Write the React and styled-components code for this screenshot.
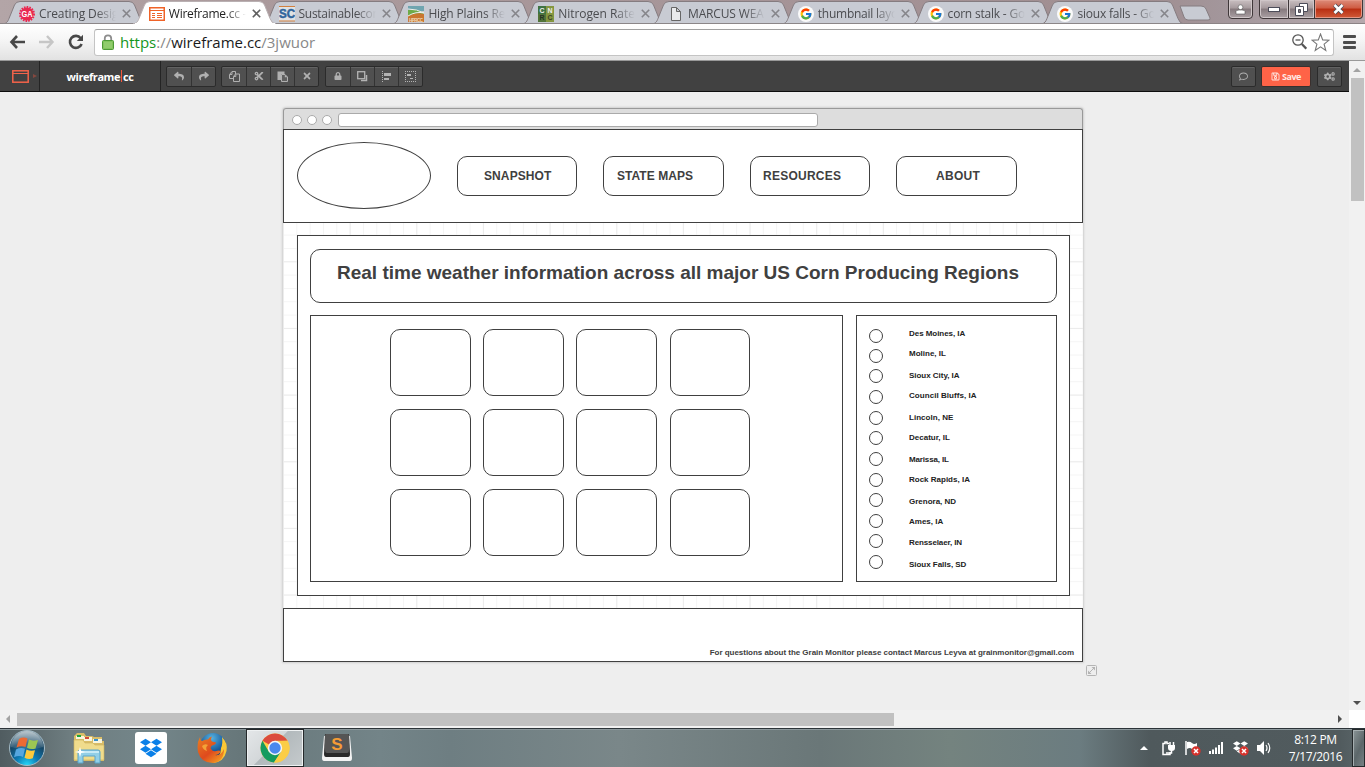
import React from "react";
import styled, { createGlobalStyle } from "styled-components";
import { FaReply, FaShare, FaCut, FaTimes, FaLock, FaRegComment, FaRegSave, FaCogs, FaDropbox } from "react-icons/fa";
import { FcGoogle } from "react-icons/fc";

const Global = createGlobalStyle`
  * { box-sizing: border-box; }
  html, body { margin: 0; padding: 0; overflow: hidden; }
  body { font-family: "Open Sans", "Noto Sans", sans-serif; }
  svg { display: block; flex: none; }
`;

const Screen = styled.div`
  width: 1365px;
  height: 767px;
  display: flex;
  flex-direction: column;
  overflow: hidden;
  background: #eee;
`;

/* ---------- browser chrome ---------- */

const TabStrip = styled.div`
  height: 24px;
  flex: none;
  display: flex;
  padding-left: 4px;
  background: linear-gradient(90deg, #b3a5a7 0, #ab9a9c 240px, #a69598 700px, #a08e91 1150px, #a3979c 1230px, #b6a9ad 1365px);
  border-bottom: 1px solid #8b8385;
`;

const TabBox = styled.div`
  position: relative;
  width: 129.8px;
  height: 24px;
  flex: none;
  display: flex;
  align-items: center;
  padding: 3px 0 0 15px;
  z-index: ${(p) => (p.$active ? 2 : 1)};
`;

const TabShape = styled.svg`
  position: absolute;
  left: -1px;
  top: 0;
`;

const Favicon = styled.span`
  position: relative;
  width: 16px;
  height: 16px;
  flex: none;
`;

const TabTitle = styled.span`
  position: relative;
  width: 77px;
  margin-left: 4px;
  overflow: hidden;
  white-space: nowrap;
  font-size: 12px;
  line-height: 17px;
  letter-spacing: ${(p) => p.$ls}px;
  color: ${(p) => (p.$active ? "#222" : "#4b4c50")};
  -webkit-mask-image: linear-gradient(90deg, #000 57px, transparent 77px);
  mask-image: linear-gradient(90deg, #000 57px, transparent 77px);
`;

const TabClose = styled.svg`
  position: relative;
  margin-left: 6px;
`;

const NewTab = styled.svg`
  margin: 5px 0 0 7px;
`;

const WindowButtons = styled.div`
  display: flex;
  margin-left: auto;
  margin-right: 2px;
`;

const WinButton = styled.div`
  width: ${(p) => p.$w}px;
  height: 20px;
  display: flex;
  align-items: center;
  justify-content: center;
  margin-left: ${(p) => p.$gap || 0}px;
  margin-top: -1px;
  border: 1px solid #3f3739;
  border-left-width: ${(p) => (p.$joined ? 0 : 1)}px;
  border-radius: ${(p) => p.$radius};
  box-shadow: inset 0 0 0 1px ${(p) => (p.$close ? "#e59684" : "#cfc6c8")};
  background: ${(p) => p.$close
    ? "linear-gradient(#dc8b79 0, #cf5b42 45%, #b92e12 50%, #d05a38 100%)"
    : "linear-gradient(#c9bfc1 0, #a69a9d 45%, #85797d 50%, #aaa0a3 100%)"};
`;

const AddressRow = styled.div`
  height: 37px;
  flex: none;
  display: flex;
  align-items: center;
  padding: 0 9px;
  background: linear-gradient(#fff 0, #f6f6f6 15px, #e2e2e2 100%);
  border-bottom: 1px solid #999;
`;

const NavIcons = styled.div`
  display: flex;
  gap: 13px;
  width: 85px;
`;

const Omnibox = styled.div`
  width: 1240px;
  height: 27px;
  display: flex;
  align-items: center;
  gap: 4px;
  padding: 0 3px 0 7px;
  background: #fff;
  border: 1px solid #c4c4c4;
  border-top-color: #a0a0a0;
  border-radius: 3px;
`;

const Url = styled.span`
  flex: 1;
  margin-left: 2px;
  font-size: 15px;
  line-height: 20px;
  letter-spacing: 0;
  color: #888;
  b { font-weight: 400; color: #1a1a1a; }
  i { font-style: normal; color: #14961d; }
`;

const MenuBars = styled.div`
  width: 13px;
  height: 14px;
  margin-left: 9px;
  display: flex;
  flex-direction: column;
  justify-content: space-between;
`;

const Bar = styled.span`
  height: 3px;
  border-radius: 1px;
  background: #4c4c4c;
`;

/* ---------- application toolbar ---------- */

const Viewport = styled.div`
  height: 667px;
  flex: none;
  display: grid;
  grid-template-columns: 1349px 16px;
  grid-template-rows: 649px 18px;
`;

const AppPane = styled.div`
  overflow: hidden;
  background: #eee;
`;

const Toolbar = styled.div`
  height: 31px;
  display: flex;
  align-items: stretch;
  padding-right: 7px;
  background: #414141;
  border-bottom: 1px solid #0d0d0d;
`;

const DevicePicker = styled.div`
  width: 40px;
  display: flex;
  align-items: center;
  padding-left: 12px;
  gap: 4px;
  border-right: 1px solid #242424;
`;

const Brand = styled.div`
  width: 121px;
  display: flex;
  align-items: center;
  justify-content: center;
  border-right: 1px solid #242424;
  color: #fff;
  font-size: 11px;
  font-weight: 700;
  letter-spacing: -0.45px;
`;

const Caret = styled.span`
  flex: none;
  width: 1px;
  height: 12px;
  margin: 0 1px;
  border-left: 1px solid #f4553c;
`;

const ButtonGroup = styled.div`
  display: flex;
  align-self: center;
  height: 21px;
  margin-left: ${(p) => p.$left}px;
  border: 1px solid #2b2b2b;
  border-radius: 2px;
  background: #505050;
  box-shadow: inset 0 1px 0 #636363;
`;

const ToolButton = styled.div`
  width: ${(p) => p.$w || 24}px;
  display: flex;
  align-items: center;
  justify-content: center;
  color: #b0b0b0;
  font-size: 10px;
  & + & { border-left: 1px solid #333; }
`;

const Actions = styled.div`
  display: flex;
  align-items: center;
  margin-left: auto;
`;

const SaveButton = styled.div`
  width: 50px;
  height: 21px;
  margin: 0 -1px 0 5px;
  display: flex;
  align-items: center;
  justify-content: center;
  gap: 2px;
  border: 1px solid #39302e;
  border-radius: 2px;
  background: #ff6347;
  color: #ffe9e4;
  font-size: 9px;
  font-weight: 700;
  letter-spacing: -0.5px;
`;

/* ---------- wireframe document ---------- */

const ink = "#404040";

const Canvas = styled.div`
  display: flex;
  align-items: flex-end;
  height: 584px;
  padding-left: 283px;
`;

const Mock = styled.div`
  width: 800px;
  height: 554px;
  margin-bottom: 14px;
  display: flex;
  flex-direction: column;
  border-radius: 3px 3px 0 0;
  box-shadow: 0 0 2px 1px #cfcfcf;
  background-color: #fff;
  background-image:
    linear-gradient(90deg, #ececec 1px, transparent 1px),
    linear-gradient(#ececec 1px, transparent 1px),
    linear-gradient(90deg, #f4f4f4 1px, transparent 1px),
    linear-gradient(#f4f4f4 1px, transparent 1px);
  background-size: 66.67px 66.67px, 66.67px 66.67px, 13.333px 13.333px, 13.333px 13.333px;
  background-position: 0 20px;
`;

const MockBar = styled.div`
  height: 21px;
  flex: none;
  display: flex;
  align-items: center;
  padding: 2px 0 0 8px;
  border: 1px solid #999;
  border-bottom: 0;
  border-radius: 3px 3px 0 0;
  background: #ddd;
`;

const Dot = styled.span`
  width: 10px;
  height: 10px;
  margin-right: 5px;
  border: 1px solid #aaa;
  border-radius: 50%;
  background: #fff;
`;

const MockAddress = styled.span`
  width: 480px;
  height: 14px;
  margin-left: 1px;
  border: 1px solid #aaa;
  border-radius: 3px;
  background: #fff;
`;

const Box = styled.div`
  border: 1px solid ${ink};
  border-radius: ${(p) => (p.$round ? 10 : 0)}px;
  background: #fff;
  font-family: "Liberation Sans", Arial, sans-serif;
  font-weight: 700;
  color: ${ink};
`;

const Header = styled(Box)`
  height: 94px;
  flex: none;
  display: flex;
  align-items: center;
  padding-left: 13px;
`;

const Logo = styled(Box)`
  width: 134px;
  height: 67px;
  margin: 0 26px 1px 0;
  border-radius: 50%;
`;

const NavItem = styled(Box)`
  width: ${(p) => p.$w}px;
  height: 40px;
  margin-right: 26px;
  padding-left: ${(p) => p.$pad}px;
  font-size: 12px;
  line-height: 38px;
  letter-spacing: ${(p) => p.$ls}px;
  white-space: nowrap;
`;

const Main = styled(Box)`
  width: 773px;
  height: 361px;
  flex: none;
  margin: 12px 0 12px 14px;
  padding: 13px 12px 0;
`;

const Headline = styled(Box)`
  height: 54px;
  margin-bottom: 12px;
  padding-left: 26px;
  font-size: 19px;
  line-height: 45px;
  letter-spacing: 0;
  white-space: nowrap;
`;

const Columns = styled.div`
  display: flex;
  justify-content: space-between;
`;

const Gallery = styled(Box)`
  width: 533px;
  height: 267px;
  padding: 13px 0 0 79px;
  display: grid;
  grid-template-columns: repeat(4, 80.5px);
  grid-auto-rows: 67px;
  gap: 13px 12.68px;
`;

const Thumb = styled(Box)``;

const Cities = styled(Box)`
  width: 201px;
  height: 267px;
  padding: 13px 0 0 12px;
`;

const City = styled.div`
  height: ${(p) => p.$h}px;
  display: flex;
  color: #222;
  font-size: 8px;
  line-height: 14px;
  white-space: nowrap;
`;

const Radio = styled(Box)`
  width: 14px;
  height: 14px;
  margin-right: 26px;
  border-radius: 50%;
`;

const CityName = styled.span`
  margin-top: ${(p) => p.$shift}px;
  letter-spacing: ${(p) => p.$ls}px;
`;

const Footer = styled(Box)`
  height: 54px;
  flex: none;
  display: flex;
  justify-content: flex-end;
  align-items: flex-end;
  padding: 0 8px 2px 0;
  font-size: 8px;
  line-height: 12px;
  letter-spacing: -0.03px;
  white-space: nowrap;
`;

const ResizeHandle = styled.svg`
  margin-left: 3px;
`;

/* ---------- scrollbars ---------- */

const VScroll = styled.div`
  background: #f1f1f1;
  display: flex;
  flex-direction: column;
  align-items: center;
  justify-content: space-between;
  padding: 7px 0 5px;
`;

const VThumb = styled.div`
  width: 13px;
  height: 123px;
  margin: 6px 0 auto 1px;
  background: #c1c1c1;
`;

const HScroll = styled.div`
  background: #f1f1f1;
  display: flex;
  align-items: center;
  padding: 0 7px 0 6px;
`;

const HThumb = styled.div`
  width: 877px;
  height: 13px;
  margin: 0 auto 0 7px;
  background: #c1c1c1;
`;

const Corner = styled.div`
  background: #fff;
`;

/* ---------- taskbar ---------- */

const Taskbar = styled.div`
  height: 39px;
  flex: none;
  display: flex;
  align-items: center;
  border-top: 1px solid #2c3439;
  box-shadow: inset 0 1px 0 #8d999d;
  background: linear-gradient(90deg, #505c60 0, #6e7d80 70px, #74868a 150px, #67777a 240px, #738488 380px, #6e7e82 450px, #7a8789 620px, #6a7778 820px, #74837f 950px, #6b7c80 1080px, #4f595c 1150px, #515b5e 1340px, #5b6669 1365px);
`;

const TaskItem = styled.div`
  width: ${(p) => p.$w}px;
  height: 38px;
  display: flex;
  align-items: center;
  justify-content: center;
  ${(p) => p.$active && `
    border: 1px solid #25292b;
    box-shadow: inset 0 0 0 1px #eef1f2;
    background: linear-gradient(135deg, #e4e7e9 0, #d3d7d9 45%, #b2b9bc 46%, #c5cacc 100%);
  `}
`;

const DropboxTile = styled.div`
  width: 32px;
  height: 32px;
  display: flex;
  align-items: center;
  justify-content: center;
  border-radius: 3px;
  background: #fff;
  color: #0a80e8;
  font-size: 22px;
`;

const Tray = styled.div`
  margin-left: auto;
  display: flex;
  align-items: center;
`;

const TrayIcon = styled.div`
  position: relative;
  width: 24px;
  height: 16px;
  display: flex;
  justify-content: center;
  color: #fff;
  font-size: 15px;
`;

const Badge = styled.svg`
  position: absolute;
  right: 3px;
  bottom: 0;
`;

const Clock = styled.div`
  width: 73px;
  margin-left: 3px;
  text-align: center;
  color: #fff;
  font-size: 12px;
  line-height: 17px;
  letter-spacing: -0.35px;
`;

const ShowDesktop = styled.div`
  width: 13px;
  height: 38px;
  border: 1px solid #24292b;
  box-shadow: inset 1px 1px 0 #a5aeb0;
  background: linear-gradient(115deg, #8b9597, #5c676a 55%, #768083);
`;

/* ---------- icons ---------- */

const GoogleIcon = () => (
  <svg width="16" height="16" viewBox="0 0 16 16">
    <circle cx="8" cy="8" r="8" fill="#fafafa" />
    <FcGoogle x="1.5" y="1.5" size="13" />
  </svg>
);

const icons = {
  ga: (
    <svg width="16" height="16" viewBox="0 0 16 16">
      <circle cx="8" cy="8" r="6.6" fill="#ea2850" />
      <circle cx="8" cy="8" r="7" fill="none" stroke="#ea2850" strokeWidth="2" strokeDasharray="1.6 1.1" />
      <text x="8" y="11.3" fontSize="9.500" fontWeight="700" textAnchor="middle" textLength="11" lengthAdjust="spacingAndGlyphs" fill="#fff" fontFamily="Liberation Sans">GA</text>
    </svg>
  ),
  wire: (
    <svg width="16" height="16" viewBox="0 0 16 16" fill="none" stroke="#ef6328">
      <rect x=".75" y="1.75" width="14.5" height="12.5" strokeWidth="1.5" />
      <path d="M1 4.500h14M3 7.500h3M3 9.500h3M3 11.500h3M8 7.500h5M8 9.500h5M8 11.500h5" />
    </svg>
  ),
  sc: (
    <svg width="16" height="16" viewBox="0 0 16 16">
      <rect y="1" width="16" height="14" fill="#dfe2e4" />
      <path d="M0 .5h16M0 15h16" stroke="#d2803e" />
      <text x="8" y="12" fontSize="12" fontWeight="700" textAnchor="middle" textLength="16" lengthAdjust="spacingAndGlyphs" fill="#2f659c" stroke="#2f659c" strokeWidth=".5" fontFamily="Liberation Sans">SC</text>
    </svg>
  ),
  hp: (
    <svg width="16" height="16" viewBox="0 0 16 16">
      <path d="M0 0h16v5H0z" fill="#6fa5b0" />
      <path d="M0 4q9-2 16 3v3H0z" fill="#6dab49" />
      <path d="M0 10q8-4 16-2v8H0z" fill="#c9762f" />
      <path d="M0 10q8-5 16-3M0 3q9 0 16 4" stroke="#eee" fill="none" />
      <text x="8" y="15.5" fontSize="4.5" fontWeight="700" textAnchor="middle" textLength="14" fill="#eed9bd" fontFamily="Liberation Sans">HPRCC</text>
    </svg>
  ),
  cn: (
    <svg width="16" height="16" viewBox="0 0 16 16">
      <path d="M0 0h8v16H0z" fill="#3f7342" />
      <path d="M8 0h8v16H8z" fill="#849640" />
      <path d="M0 8h8v8H0z" fill="#52743a" />
      <g fontSize="7" fontWeight="700" textAnchor="middle" fontFamily="Liberation Sans">
        <text x="4" y="6.5" fill="#eee">C</text><text x="12" y="6.5" fill="#eee">N</text>
        <text x="4" y="14" fill="#263423">R</text><text x="12" y="14" fill="#3c4526">C</text>
      </g>
    </svg>
  ),
  page: (
    <svg width="16" height="16" viewBox="0 0 16 16" fill="#e9eaec" stroke="#666">
      <path d="M3.500 1.500h5l4 4v9h-9zM8.500 1.500v4h4" />
    </svg>
  ),
  google: <GoogleIcon />,
};

const tabs = [
  { icon: "ga", title: "Creating Desig", ls: -0.12 },
  { icon: "wire", title: "Wireframe.cc -", ls: -0.25, active: true },
  { icon: "sc", title: "Sustainablecor", ls: -0.3 },
  { icon: "hp", title: "High Plains Re", ls: -0.15 },
  { icon: "cn", title: "Nitrogen Rate", ls: -0.05 },
  { icon: "page", title: "MARCUS WEA", ls: -0.15 },
  { icon: "google", title: "thumbnail layo", ls: -0.25 },
  { icon: "google", title: "corn stalk - Go", ls: -0.2 },
  { icon: "google", title: "sioux falls - Go", ls: -0.2 },
];

const Tab = ({ icon, title, ls, active }) => (
  <TabBox $active={active}>
    <TabShape width="144" height="24" viewBox="0 0 144 24">
      <path
        d="M0 24C4 23.500 5 21 6 18.500L11.500 5Q13 1.500 17 1.500H126Q130 1.500 131.500 5L137 18.500Q139 24 143 24Z"
        fill={active ? "#fff" : "#c8cbd3"}
        stroke={active ? "#b9b0b2" : "#857c80"}
      />
      {active ? <path d="M2 24h140" stroke="#fff" strokeWidth="2" /> : <path d="M0 23.500h143" stroke="#8b8688" />}
    </TabShape>
    <Favicon>{icons[icon]}</Favicon>
    <TabTitle $active={active} $ls={ls}>{title}</TabTitle>
    <TabClose width="9" height="9" viewBox="0 0 9 9" stroke={active ? "#606060" : "#85858a"} strokeWidth="1.6">
      <path d="M.8.8l7.400 7.400M8.200.8L.8 8.200" />
    </TabClose>
  </TabBox>
);

const FilesIcon = () => (
  <svg width="11" height="11" viewBox="0 0 11 11" fill="none" stroke="#b0b0b0">
    <path d="M4 7.500H.5v-4l2.500-3h3.500V3M.8 3.500H3V.8" />
    <path d="M4.500 5.500l2-2.500h4v7.500h-6zM4.800 5.500h2V3.200" />
  </svg>
);

const PasteIcon = () => (
  <svg width="11" height="11" viewBox="0 0 11 11">
    <path d="M.5.5h7V3H4v6H.5z" fill="#b0b0b0" />
    <path d="M4.500 3.500h3.500L10.500 6v4.500h-6z" fill="#606060" stroke="#b0b0b0" />
    <path d="M7.800 3.500v2.700h2.700z" fill="#b0b0b0" />
  </svg>
);

const AlignIcon = () => (
  <svg width="11" height="11" viewBox="0 0 11 11" shapeRendering="crispEdges">
    <path d="M1.500 0v11" stroke="#b4b4b4" strokeDasharray="1 1" />
    <path d="M3 2h7v3H3zM3 7h5v2H3z" fill="#b4b4b4" />
  </svg>
);

const GroupIcon = () => (
  <svg width="11" height="11" viewBox="0 0 11 11" shapeRendering="crispEdges">
    <path d="M0 .5h11M0 10.500h11M.5 0v11M10.500 0v11" stroke="#b4b4b4" strokeDasharray="1 1" />
    <path d="M2 3h4v2H2zM5 7h3v1H5z" fill="#b4b4b4" />
  </svg>
);

const StackIcon = () => (
  <svg width="11" height="11" viewBox="0 0 11 11" fill="none" stroke="#b4b4b4">
    <rect x=".7" y=".7" width="7" height="7" strokeWidth="1.300" />
    <path d="M9.500 4v5.500H4" strokeWidth="1.500" />
  </svg>
);

const RedX = () => (
  <Badge width="10" height="10" viewBox="0 0 10 10">
    <circle cx="5" cy="5" r="4.700" fill="#d6322c" />
    <path d="M3 3l4 4M7 3L3 7" stroke="#fff" strokeWidth="1.500" />
  </Badge>
);

const StartOrb = () => (
  <svg width="38" height="38" viewBox="0 0 38 38">
    <defs>
      <radialGradient id="orb" cx=".5" cy="1" r=".95">
        <stop offset="0" stopColor="#27dcfb" /><stop offset=".35" stopColor="#0b79b3" />
        <stop offset=".7" stopColor="#174766" /><stop offset="1" stopColor="#6b8796" />
      </radialGradient>
      <linearGradient id="orbShine" x2="0" y2="1">
        <stop offset="0" stopColor="#fff" stopOpacity=".5" /><stop offset="1" stopColor="#fff" stopOpacity=".08" />
      </linearGradient>
    </defs>
    <circle cx="19" cy="19" r="17.500" fill="url(#orb)" stroke="#a3bac5" />
    <path d="M3 18a16 16 0 0 1 32 0q-15 5-32 0z" fill="url(#orbShine)" />
    <path d="M11 10q4-2.500 8.500-.5L17.500 18q-4.500-1.500-9 .5z" fill="#ec6a33" />
    <path d="M21 10.500q4 2 9 .5l-2.500 8.500q-4.500 1.500-8.500-.8z" fill="#9cc653" />
    <path d="M8 20.500q4.500-2.300 9-.8L15 28q-4-2-9 .3z" fill="#55a6df" />
    <path d="M18.500 20.500q4 2 8.500.8l-2.200 8q-4 1.800-8.300-.6z" fill="#fbc93c" />
  </svg>
);

const ExplorerIcon = () => (
  <svg width="34" height="32" viewBox="0 0 34 32">
    <path d="M2 4l3-3h7l2 3h6l2 1h8v4h2v20H2z" fill="#d9bd68" />
    <path d="M4 4h8v3H4zM12 5h8v4h-8zM21 7h9v4h-9z" fill="#f9f5dd" />
    <path d="M5 3h4v2H5z" fill="#1ca43b" /><path d="M13 5h4v2h-4z" fill="#d44a36" /><path d="M22 7h4v2h-4z" fill="#3990c9" />
    <path d="M2 8h9l2 3h8l2 2h9v15H2z" fill="#f0dc8c" stroke="#cfb25c" strokeWidth=".6" />
    <path d="M6 31V20q0-2 2-2h18q2 0 2 2v11h-5v-7H11v7z" fill="#92cfe7" stroke="#5ba4c9" />
    <path d="M7 20h20" stroke="#d8f3fb" strokeWidth="1.500" />
    <path d="M8 15l1.200 4 4 1-4 1-1.200 4-1.200-4-4-1 4-1z" fill="#fff" />
  </svg>
);

const FirefoxIcon = () => (
  <svg width="31" height="32" viewBox="0 0 31 32">
    <defs>
      <linearGradient id="fox" x2=".8" y2="1">
        <stop offset="0" stopColor="#e98021" /><stop offset=".6" stopColor="#df4a1d" /><stop offset="1" stopColor="#f59b22" />
      </linearGradient>
      <radialGradient id="globe" cx=".45" cy=".2" r=".8">
        <stop offset="0" stopColor="#57b2df" /><stop offset=".6" stopColor="#1b5e9f" /><stop offset="1" stopColor="#112e63" />
      </radialGradient>
    </defs>
    <circle cx="16" cy="14" r="13" fill="url(#globe)" />
    <path d="M25 5q6 6 4.500 14Q27 30 16 31 24 25 24 16q2-4 1-11z" fill="#fbc735" />
    <path d="M3 5q0 3 2 4 3-2 6-1.500 1-2.500 4-3-2 3 0 5l4 1q0 2-4 3-2 2-1 3.500 2 3 5 2 3-1 5 0-2 4-6 4 6 1 9-6Q27 30 16 31 4 31 1 20-.5 11 3 5z" fill="url(#fox)" />
    <path d="M5 14q3-3 6-1-3 2-1 6-4-1-5-5z" fill="#f3a238" />
  </svg>
);

const ChromeIcon = () => (
  <svg width="30" height="30" viewBox="0 0 30 30">
    <circle cx="15" cy="15" r="14.500" fill="#fbcd46" />
    <path d="M15 15L2.450 7.750A14.500 14.500 0 0 1 27.550 7.750H15z" fill="#db4b3e" />
    <path d="M2.450 7.750A14.500 14.500 0 0 0 14 29.500L21.300 18.600 15 15 8.700 18.600z" fill="#149b5f" />
    <path d="M27.550 7.750A14.500 14.500 0 0 1 14 29.500L21.300 18.600 21 8z" fill="#fbcd46" />
    <circle cx="15" cy="15" r="7.200" fill="#f4f6f9" /><circle cx="15" cy="15" r="5.700" fill="#4a88ee" />
  </svg>
);

const SublimeIcon = () => (
  <svg width="32" height="30" viewBox="0 0 32 30">
    <path d="M3 3h26l2 22q0 3-2 3H3q-2 0-2-3z" fill="#f3f3f3" />
    <path d="M4 1h24l1 20q0 3-2 3H5q-2 0-2-3z" fill="#292929" />
    <path d="M5 1h22q1 0 1 2v14q0 3-2 3H6q-2 0-2-3V3q0-2 1-2z" fill="#555" />
    <text x="16" y="16.500" fontSize="17" fontWeight="700" fill="#f59c35" textAnchor="middle" fontFamily="Liberation Sans">S</text>
  </svg>
);

const nav = [
  { label: "SNAPSHOT", w: 120, pad: 26, ls: 0.1 },
  { label: "STATE MAPS", w: 121, pad: 13, ls: 0.05 },
  { label: "RESOURCES", w: 120, pad: 12, ls: 0.25 },
  { label: "ABOUT", w: 121, pad: 39, ls: 0.3 },
];

const cities = [
  ["Des Moines, IA", 20, -2, -0.05],
  ["Moline, IL", 20, -2, 0],
  ["Sioux City, IA", 21, 0, -0.03],
  ["Council Bluffs, IA", 21, -1, 0.05],
  ["Lincoln, NE", 20, 0, 0.03],
  ["Decatur, IL", 21, 0, 0],
  ["Marissa, IL", 21, 1, -0.15],
  ["Rock Rapids, IA", 20, 0, 0],
  ["Grenora, ND", 21, 2, 0],
  ["Ames, IA", 20, 1, 0],
  ["Rensselaer, IN", 21, 2, -0.12],
  ["Sioux Falls, SD", 14, 3, -0.03],
];

export default function App() {
  return (
    <Screen>
      <Global />
      <TabStrip>
        {tabs.map((t) => <Tab key={t.title} {...t} />)}
        <NewTab width="33" height="16" viewBox="0 0 33 16">
          <path d="M1 1h21q4 0 5 3l4 9q1 2-2 2H9q-3 0-4-3z" fill="#c8cbd3" stroke="#857c80" />
        </NewTab>
        <WindowButtons>
          <WinButton $w={25} $radius="0 0 4px 4px">
            <svg width="11" height="11" viewBox="0 0 11 11" fill="#fff" stroke="#555" strokeWidth=".6">
              <path d="M1 10V7.500Q1 6 4 6h3q3 0 3 1.500V10z" /><circle cx="5.500" cy="3.200" r="2.400" />
            </svg>
          </WinButton>
          <WinButton $w={30} $gap={6} $radius="0 0 0 4px">
            <svg width="12" height="5" viewBox="0 0 12 5"><rect x=".5" y=".5" width="11" height="4" fill="#fff" stroke="#4c4c59" /></svg>
          </WinButton>
          <WinButton $w={26} $joined $radius="0">
            <svg width="13" height="13" viewBox="0 0 13 13" fill="#fff" stroke="#4c4c59">
              <path d="M4.500.5h8v8h-8z" /><path d="M.5 3.500h8v9h-8z" /><path d="M3.500 6.500h2v3h-2z" fill="#8a7e82" />
            </svg>
          </WinButton>
          <WinButton $w={48} $joined $close $radius="0 0 4px 0">
            <svg width="13" height="12" viewBox="0 0 13 12">
              <path d="M2.500 2l8 8M10.500 2l-8 8" stroke="#4c4c59" strokeWidth="4.200" />
              <path d="M2.500 2l8 8M10.500 2l-8 8" stroke="#fff" strokeWidth="2.500" />
            </svg>
          </WinButton>
        </WindowButtons>
      </TabStrip>

      <AddressRow>
        <NavIcons>
          <svg width="17" height="16" viewBox="0 0 17 16" fill="none" stroke="#484848" strokeWidth="2.600"><path d="M8 2L2.500 8 8 14M3 8h13" /></svg>
          <svg width="16" height="16" viewBox="0 0 16 16" fill="none" stroke="#c6c6c6" strokeWidth="2.400"><path d="M8 2l5.500 6L8 14M13 8H0" /></svg>
          <svg width="16" height="16" viewBox="0 0 16 16"><path d="M12.700 4.200A6 6 0 1 0 13.600 10" fill="none" stroke="#484848" strokeWidth="2.600" /><path d="M15 .8V7H8.800z" fill="#484848" /></svg>
        </NavIcons>
        <Omnibox>
          <svg width="12" height="16" viewBox="0 0 12 16">
            <path d="M2.800 8V4.500a3.200 3.200 0 0 1 6.400 0V8" fill="none" stroke="#8d8d8d" strokeWidth="1.800" />
            <rect x=".5" y="6.500" width="11" height="9" rx="1" fill="#82c45c" stroke="#4c9a35" />
            <path d="M2 9h8M2 11h8M2 13h8" stroke="#a7da86" strokeWidth=".8" />
          </svg>
          <Url><i>https</i>://<b>wireframe.cc</b>/3jwuor</Url>
          <svg width="15" height="16" viewBox="0 0 15 16" fill="none" stroke="#555"><circle cx="6" cy="6" r="5.200" strokeWidth="1.300" /><path d="M9.800 10l4.500 4.700" strokeWidth="2.200" /><path d="M3.500 6h5" strokeWidth="1.300" /></svg>
          <svg width="19" height="19" viewBox="0 0 19 19" fill="#fff" stroke="#777" strokeWidth="1.100"><path d="M9.500 1l2.200 5.900 6.300.3-4.900 3.900 1.700 6.400-5.300-3.600-5.300 3.600 1.700-6.400L1 7.200l6.300-.3z" /></svg>
        </Omnibox>
        <MenuBars><Bar /><Bar /><Bar /></MenuBars>
      </AddressRow>

      <Viewport>
        <AppPane>
          <Toolbar>
            <DevicePicker>
              <svg width="17" height="13" viewBox="0 0 17 13" fill="none" stroke="#f4634a"><rect x=".8" y=".8" width="15.400" height="11.400" strokeWidth="1.500" /><path d="M1 3.500h15" /></svg>
              <svg width="4" height="4" viewBox="0 0 4 4"><path d="M0 0l4 2-4 2z" fill="#85483f" /></svg>
            </DevicePicker>
            <Brand>wireframe<Caret />cc</Brand>
            <ButtonGroup $left={5}>
              <ToolButton><FaReply /></ToolButton>
              <ToolButton><FaShare /></ToolButton>
            </ButtonGroup>
            <ButtonGroup $left={5}>
              <ToolButton><FilesIcon /></ToolButton>
              <ToolButton><FaCut /></ToolButton>
              <ToolButton><PasteIcon /></ToolButton>
              <ToolButton><FaTimes size={10} /></ToolButton>
            </ButtonGroup>
            <ButtonGroup $left={6}>
              <ToolButton><FaLock size={8} /></ToolButton>
              <ToolButton><StackIcon /></ToolButton>
              <ToolButton><AlignIcon /></ToolButton>
              <ToolButton><GroupIcon /></ToolButton>
            </ButtonGroup>
            <Actions>
              <ButtonGroup $left={0}><ToolButton $w={23}><FaRegComment size={9} /></ToolButton></ButtonGroup>
              <SaveButton><FaRegSave />Save</SaveButton>
              <ButtonGroup $left={7}><ToolButton $w={23}><FaCogs size={11} /></ToolButton></ButtonGroup>
            </Actions>
          </Toolbar>

          <Canvas>
            <Mock>
              <MockBar><Dot /><Dot /><Dot /><MockAddress /></MockBar>
              <Header>
                <Logo />
                {nav.map((n) => <NavItem key={n.label} $round $w={n.w} $pad={n.pad} $ls={n.ls}>{n.label}</NavItem>)}
              </Header>
              <Main>
                <Headline $round>Real time weather information across all major US Corn Producing Regions</Headline>
                <Columns>
                  <Gallery>{Array.from({ length: 12 }, (_, i) => <Thumb key={i} $round />)}</Gallery>
                  <Cities>
                    {cities.map(([name, h, shift, ls]) => (
                      <City key={name} $h={h}><Radio /><CityName $shift={shift} $ls={ls}>{name}</CityName></City>
                    ))}
                  </Cities>
                </Columns>
              </Main>
              <Footer>For questions about the Grain Monitor please contact Marcus Leyva at grainmonitor@gmail.com</Footer>
            </Mock>
            <ResizeHandle width="11" height="11" viewBox="0 0 11 11" fill="none" stroke="#b4b4b4">
              <rect x=".5" y=".5" width="10" height="10" rx="1" /><path d="M3 8l5-5" /><path d="M5.500 2H9v3.500zM2 5.500V9h3.500z" fill="#b4b4b4" stroke="none" />
            </ResizeHandle>
          </Canvas>
        </AppPane>
        <VScroll>
          <svg width="8" height="4" viewBox="0 0 8 4"><path d="M0 4l4-4 4 4z" fill="#a3a3a3" /></svg>
          <VThumb />
          <svg width="8" height="4" viewBox="0 0 8 4"><path d="M0 0l4 4 4-4z" fill="#505050" /></svg>
        </VScroll>
        <HScroll>
          <svg width="4" height="8" viewBox="0 0 4 8"><path d="M4 0L0 4l4 4z" fill="#a3a3a3" /></svg>
          <HThumb />
          <svg width="4" height="8" viewBox="0 0 4 8"><path d="M0 0l4 4-4 4z" fill="#505050" /></svg>
        </HScroll>
        <Corner />
      </Viewport>

      <Taskbar>
        <TaskItem $w={54}><StartOrb /></TaskItem>
        <TaskItem $w={70}><ExplorerIcon /></TaskItem>
        <TaskItem $w={54}><DropboxTile><FaDropbox /></DropboxTile></TaskItem>
        <TaskItem $w={68}><FirefoxIcon /></TaskItem>
        <TaskItem $w={58} $active><ChromeIcon /></TaskItem>
        <TaskItem $w={66}><SublimeIcon /></TaskItem>
        <Tray>
          <TrayIcon><svg width="8" height="16" viewBox="0 0 8 16"><path d="M0 10l4-4 4 4z" fill="#fff" /></svg></TrayIcon>
          <TrayIcon>
            <svg width="15" height="16" viewBox="0 0 15 16" fill="none" stroke="#fff" strokeWidth="1.500">
              <path d="M8 3.500H6V2H4v1.500H2v11h7V12" /><path d="M9 2v3M12.500 2v3" /><path d="M7 5h7v3q0 3-3.500 3T7 8z" fill="#fff" stroke="none" /><path d="M10.500 10v3H5" />
            </svg>
          </TrayIcon>
          <TrayIcon>
            <svg width="16" height="16" viewBox="0 0 16 16"><path d="M2 1v14" stroke="#fff" strokeWidth="1.500" /><path d="M3 2q3-1 5 1t5 0v7q-3 1-5-1T3 9z" fill="#fff" /></svg>
            <RedX />
          </TrayIcon>
          <TrayIcon>
            <svg width="16" height="16" viewBox="0 0 16 16" fill="#fff"><path d="M1 11h2v3H1zM4 9.500h2V14H4zM7 7.500h2V14H7zM10 5h2v9h-2zM13 2h2v12h-2z" /></svg>
          </TrayIcon>
          <TrayIcon><FaDropbox /><RedX /></TrayIcon>
          <TrayIcon>
            <svg width="16" height="16" viewBox="0 0 16 16"><path d="M1 5h3l4-4v14l-4-4H1z" fill="#fff" /><path d="M10 5q2 3 0 6M12 3q3.500 5 0 10" fill="none" stroke="#fff" strokeWidth="1.200" /></svg>
          </TrayIcon>
          <Clock>8:12 PM<br />7/17/2016</Clock>
          <ShowDesktop />
        </Tray>
      </Taskbar>
    </Screen>
  );
}
